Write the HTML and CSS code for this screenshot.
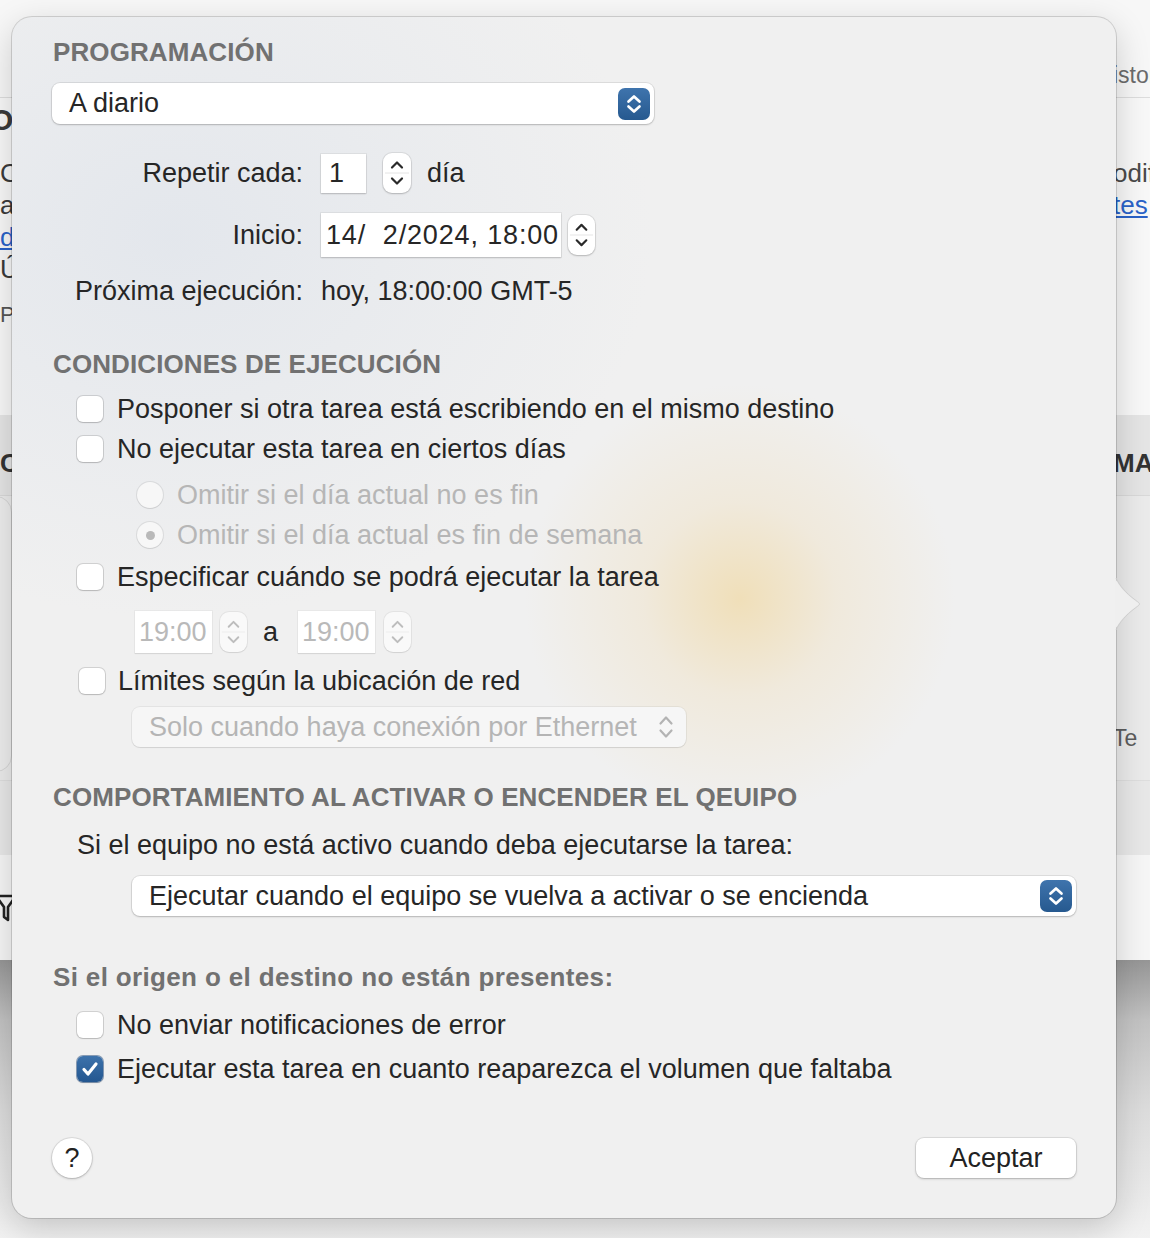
FILE: index.html
```html
<!DOCTYPE html>
<html lang="es">
<head>
<meta charset="utf-8">
<title>Programación</title>
<link rel="stylesheet" href="styles.css">
</head>
<body>
<div class="screen">
  <div class="backdrop" aria-hidden="true">
    <div class="bg-row bg-toolbar">
      <span class="frag-l"></span>
      <span class="frag-r frag-muted">istorial</span>
    </div>
    <div class="bg-content">
      <div class="bg-row bg-line-head"><span class="frag-l frag-head">O</span><span class="frag-r"></span></div>
      <div class="bg-row bg-line bg-line-first"><span class="frag-l">C</span><span class="frag-r frag-dark">odificar</span></div>
      <div class="bg-row bg-line"><span class="frag-l">a</span><span class="frag-r frag-link">tes</span></div>
      <div class="bg-row bg-line"><span class="frag-l frag-link">de</span><span class="frag-r"></span></div>
      <div class="bg-row bg-line"><span class="frag-l">Ú</span><span class="frag-r"></span></div>
      <div class="bg-row bg-line bg-line-last"><span class="frag-l frag-small">P</span><span class="frag-r"></span></div>
    </div>
    <div class="bg-row bg-band"><span class="frag-l frag-bold">C</span><span class="frag-r frag-bold">MAT</span></div>
    <div class="bg-row bg-panel">
      <span class="frag-l"><span class="bg-card"></span></span>
      <span class="frag-r frag-muted frag-te">Te</span>
    </div>
    <div class="bg-strip"></div>
    <div class="bg-row bg-footer">
      <span class="frag-l">
        <svg class="funnel" viewBox="0 0 24 30" width="24" height="30"><path d="M2 3h20l-8 11v13l-4-3V14z" fill="none" stroke="#222" stroke-width="2.6" stroke-linejoin="round"/></svg>
      </span>
      <span class="frag-r"></span>
    </div>
    <div class="bg-shadow"></div>
  </div>

  <div class="popover">
    <svg class="pop-arrow" viewBox="0 0 26 52" width="26" height="52">
      <path d="M0 0 C4 8 10 15 18 21 C22 24 24 25 24 26 C24 27 22 28 18 31 C10 37 4 44 0 52 Z" fill="#efefef"/>
      <path d="M1 0 C5 8 11 15 19 21 C23 24 24.5 25 24.5 26 C24.5 27 23 28 19 31 C11 37 5 44 1 52" fill="none" stroke="#cfcfcf" stroke-width="1"/>
    </svg>

    <h2 class="sec-title">PROGRAMACIÓN</h2>
    <div class="popup popup-freq">
      <span class="popup-label">A diario</span>
      <span class="popup-btn"><svg viewBox="0 0 32 32" width="32" height="32"><path d="M10.5 13.5l5.5-5 5.5 5M10.5 18.5l5.5 5 5.5-5" fill="none" stroke="#fff" stroke-width="2.7" stroke-linecap="round" stroke-linejoin="round"/></svg></span>
    </div>

    <div class="form-row row-repeat">
      <span class="form-label">Repetir cada:</span>
      <span class="field field-num">1</span>
      <span class="stepper stepper-repeat"><svg viewBox="0 0 28 40" width="28" height="40"><line x1="2" y1="20" x2="26" y2="20" stroke="#e4e4e4" stroke-width="1"/><path d="M9 14.5l5-5 5 5M9 25.5l5 5 5-5" fill="none" stroke="#2a2a2a" stroke-width="2.2" stroke-linecap="round" stroke-linejoin="round"/></svg></span>
      <span class="unit">día</span>
    </div>
    <div class="form-row row-start">
      <span class="form-label">Inicio:</span>
      <span class="field field-date">14/  2/2024, 18:00</span>
      <span class="stepper stepper-start"><svg viewBox="0 0 28 40" width="27" height="40"><line x1="2" y1="20" x2="26" y2="20" stroke="#e4e4e4" stroke-width="1"/><path d="M9 14.5l5-5 5 5M9 25.5l5 5 5-5" fill="none" stroke="#2a2a2a" stroke-width="2.2" stroke-linecap="round" stroke-linejoin="round"/></svg></span>
    </div>
    <div class="form-row row-next">
      <span class="form-label">Próxima ejecución:</span>
      <span class="value">hoy, 18:00:00 GMT-5</span>
    </div>

    <h2 class="sec-title title-cond">CONDICIONES DE EJECUCIÓN</h2>
    <label class="check-row cr-1"><span class="cb"></span><span>Posponer si otra tarea está escribiendo en el mismo destino</span></label>
    <label class="check-row cr-2"><span class="cb"></span><span>No ejecutar esta tarea en ciertos días</span></label>
    <div class="radio-row rr-1"><span class="radio"></span><span>Omitir si el día actual no es fin</span></div>
    <div class="radio-row rr-2"><span class="radio radio-on"></span><span>Omitir si el día actual es fin de semana</span></div>
    <label class="check-row cr-3"><span class="cb"></span><span>Especificar cuándo se podrá ejecutar la tarea</span></label>
    <div class="time-row">
      <span class="field field-time">19:00</span>
      <span class="stepper stepper-off"><svg viewBox="0 0 28 40" width="27" height="40"><line x1="2" y1="20" x2="26" y2="20" stroke="#ececec" stroke-width="1"/><path d="M9 14.5l5-5 5 5M9 25.5l5 5 5-5" fill="none" stroke="#bdbdbd" stroke-width="2" stroke-linecap="round" stroke-linejoin="round"/></svg></span>
      <span class="time-sep">a</span>
      <span class="field field-time">19:00</span>
      <span class="stepper stepper-off"><svg viewBox="0 0 28 40" width="27" height="40"><line x1="2" y1="20" x2="26" y2="20" stroke="#ececec" stroke-width="1"/><path d="M9 14.5l5-5 5 5M9 25.5l5 5 5-5" fill="none" stroke="#bdbdbd" stroke-width="2" stroke-linecap="round" stroke-linejoin="round"/></svg></span>
    </div>
    <label class="check-row cr-4"><span class="cb"></span><span>Límites según la ubicación de red</span></label>
    <div class="popup popup-off">
      <span class="popup-label">Solo cuando haya conexión por Ethernet</span>
      <svg class="popup-chev" viewBox="0 0 16 26" width="16" height="26"><path d="M2.5 9.5l5.5-6 5.5 6M2.5 16.5l5.5 6 5.5-6" fill="none" stroke="#b3b3b3" stroke-width="2.2" stroke-linecap="round" stroke-linejoin="round"/></svg>
    </div>

    <h2 class="sec-title title-wake">COMPORTAMIENTO AL ACTIVAR O ENCENDER EL QEUIPO</h2>
    <p class="plain-row">Si el equipo no está activo cuando deba ejecutarse la tarea:</p>
    <div class="popup popup-wake">
      <span class="popup-label">Ejecutar cuando el equipo se vuelva a activar o se encienda</span>
      <span class="popup-btn"><svg viewBox="0 0 32 32" width="32" height="32"><path d="M10.5 13.5l5.5-5 5.5 5M10.5 18.5l5.5 5 5.5-5" fill="none" stroke="#fff" stroke-width="2.7" stroke-linecap="round" stroke-linejoin="round"/></svg></span>
    </div>

    <h2 class="sec-title title-missing">Si el origen o el destino no están presentes:</h2>
    <label class="check-row cr-5"><span class="cb"></span><span>No enviar notificaciones de error</span></label>
    <label class="check-row cr-6"><span class="cb cb-on"><svg viewBox="0 0 26 26" width="26" height="26"><path d="M7 13.5l4 4.5 8-10" fill="none" stroke="#fff" stroke-width="3.2" stroke-linecap="round" stroke-linejoin="round"/></svg></span><span>Ejecutar esta tarea en cuanto reaparezca el volumen que faltaba</span></label>

    <div class="footer">
      <button class="help-btn" type="button">?</button>
      <button class="ok-btn" type="button">Aceptar</button>
    </div>
  </div>
</div>
</body>
</html>
```

FILE: styles.css
```css
* { box-sizing: border-box; }

html, body {
  margin: 0;
  width: 1150px;
  height: 1238px;
  overflow: hidden;
}

body {
  font-family: "Liberation Sans", Arial, sans-serif;
  color: #262626;
  background: #efefef;
}

.screen {
  position: relative;
  width: 1150px;
  height: 1238px;
  overflow: hidden;
}

/* ---------- background window ---------- */
.backdrop {
  display: flex;
  flex-direction: column;
  height: 100%;
}

.bg-row {
  display: flex;
  justify-content: space-between;
}

.frag-l,
.frag-r {
  display: block;
  overflow: hidden;
  white-space: nowrap;
  font-size: 26px;
  line-height: 32px;
  color: #3a3a3a;
}

.frag-l { width: 12px; }
.frag-r { width: 34px; text-indent: -3px; }

.frag-muted { color: #6b6b6b; font-size: 23px; }
.frag-dark { color: #4a4a4a; }
.frag-link { color: #2a62c8; text-decoration: underline; }
.frag-bold { font-weight: bold; color: #333; }
.frag-small { font-size: 22px; color: #555; }
.frag-head { font-weight: bold; font-size: 30px; line-height: 44px; text-indent: -10px; }

.bg-toolbar {
  height: 98px;
  background: #f7f7f7;
  border-bottom: 1px solid #dddddd;
  align-items: flex-end;
  padding-bottom: 6px;
}

.bg-content {
  height: 317px;
  background: #f8f8f8;
  display: flex;
  flex-direction: column;
}

.bg-line-head { height: 44px; }
.bg-line { height: 32px; }
.bg-line-first { margin-top: 15px; }
.bg-line-last { margin-top: 14px; }

.bg-band {
  height: 81px;
  background: #e5e5e5;
  border-bottom: 1px solid #d9d9d9;
  padding-top: 32px;
}

.bg-panel {
  height: 284px;
  background: #ebebeb;
}

.bg-card {
  display: block;
  width: 40px;
  height: 276px;
  margin-left: -28px;
  border: 1px solid #d6d6d6;
  border-radius: 16px;
  background: #ededed;
}

.frag-te {
  align-self: flex-end;
  margin-bottom: 26px;
  color: #5c5c5c;
}

.bg-strip {
  height: 75px;
  background: #e8e8e8;
  border-top: 1px solid #dedede;
}

.bg-footer {
  height: 105px;
  background: #f6f6f6;
  align-items: center;
}

.funnel { display: block; margin-left: -6px; }

.bg-shadow {
  flex: 1;
  background: linear-gradient(#969696 0, #c2c2c2 60px, #dcdcdc 150px, #ebebeb 240px, #f2f2f2 100%);
}

/* ---------- popover ---------- */
.popover {
  position: absolute;
  left: 12px;
  top: 17px;
  width: 1104px;
  height: 1201px;
  padding: 20px 40px 40px;
  display: flex;
  flex-direction: column;
  border-radius: 20px;
  background:
    radial-gradient(circle 215px at 728px 582px, rgba(240, 222, 182, 0.95) 0, rgba(240, 228, 204, 0.55) 45%, rgba(240, 240, 240, 0) 100%),
    radial-gradient(ellipse 480px 380px at 160px 220px, rgba(226, 230, 236, 0.9), rgba(240, 240, 240, 0) 100%),
    #f0f0f0;
  box-shadow: 0 0 0 1px rgba(0, 0, 0, 0.14), 0 10px 34px rgba(0, 0, 0, 0.18);
  font-size: 27px;
}

.pop-arrow {
  position: absolute;
  left: 1103px;
  top: 561px;
}

.sec-title {
  margin: 0;
  padding-left: 1px;
  height: 30px;
  line-height: 30px;
  font-size: 26px;
  font-weight: bold;
  color: #717171;
  white-space: nowrap;
  letter-spacing: 0.1px;
}

.title-cond { margin-top: 40px; }
.title-wake { margin-top: 35px; }
.title-missing { margin-top: 46px; letter-spacing: 0.35px; }

/* popup buttons */
.popup {
  display: flex;
  align-items: center;
  justify-content: space-between;
  height: 40px;
  padding: 0 4px 0 17px;
  background: #ffffff;
  border-radius: 8px;
  box-shadow: 0 0 0 1px rgba(0, 0, 0, 0.08), 0 1px 2px rgba(0, 0, 0, 0.18);
  white-space: nowrap;
}

.popup-freq {
  margin-top: 16px;
  width: 602px;
  height: 41px;
}

.popup-wake {
  margin-top: 13px;
  margin-left: 80px;
  width: 944px;
}

.popup-off {
  margin-top: 8px;
  margin-left: 80px;
  width: 554px;
  padding-right: 12px;
  background: #f6f6f6;
  color: #b5b5b5;
  box-shadow: 0 0 0 1px rgba(0, 0, 0, 0.05), 0 1px 1px rgba(0, 0, 0, 0.08);
}

.popup-btn {
  display: flex;
  width: 32px;
  height: 32px;
  border-radius: 7px;
  background: linear-gradient(#3f74ad, #26598f);
}

.popup-chev { display: block; }

/* form rows */
.form-row {
  display: flex;
  align-items: center;
  white-space: nowrap;
}

.form-label {
  width: 251px;
  margin-right: 18px;
  text-align: right;
}

.row-repeat { margin-top: 29px; height: 40px; }
.row-start { margin-top: 20px; height: 44px; }
.row-next { margin-top: 16px; height: 36px; }

.field {
  display: flex;
  align-items: center;
  background: #ffffff;
  box-shadow: 0 0 0 1px rgba(0, 0, 0, 0.05), 0 1px 1.5px rgba(0, 0, 0, 0.18);
  white-space: pre;
}

.field-num { width: 45px; height: 39px; padding-left: 8px; }
.field-date { width: 240px; height: 44px; padding-left: 5px; letter-spacing: 0.85px; }

.stepper {
  display: flex;
  width: 28px;
  height: 40px;
  border-radius: 9px;
  background: #ffffff;
  box-shadow: 0 0 0 1px rgba(0, 0, 0, 0.07), 0 1px 2px rgba(0, 0, 0, 0.18);
  overflow: hidden;
}

.stepper-repeat { margin-left: 17px; }
.stepper-start { margin-left: 7px; width: 27px; }
.unit { margin-left: 16px; }

/* checkboxes */
.check-row,
.radio-row,
.plain-row {
  display: flex;
  align-items: center;
  gap: 14px;
  height: 36px;
  margin: 0;
  padding-left: 25px;
  white-space: nowrap;
}

.cr-1 { margin-top: 12px; }
.cr-2 { margin-top: 4px; }
.cr-3 { margin-top: 6px; }
.cr-4 { margin-top: 9px; padding-left: 27px; gap: 13px; }
.cr-5 { margin-top: 15px; }
.cr-6 { margin-top: 8px; }

.cb {
  flex: none;
  width: 26px;
  height: 26px;
  border-radius: 6px;
  background: #ffffff;
  box-shadow: 0 0 0 1px rgba(0, 0, 0, 0.13), 0 1px 1.5px rgba(0, 0, 0, 0.12);
}

.cb-on {
  display: flex;
  background: linear-gradient(#3d72ab, #245790);
  box-shadow: 0 0 0 1px rgba(30, 70, 120, 0.5), 0 1px 1.5px rgba(0, 0, 0, 0.15);
}

.radio-row {
  padding-left: 85px;
  color: #b6b6b6;
}

.rr-1 { margin-top: 10px; }
.rr-2 { margin-top: 4px; }

.radio {
  flex: none;
  display: flex;
  align-items: center;
  justify-content: center;
  width: 26px;
  height: 26px;
  border-radius: 50%;
  background: #f7f7f7;
  box-shadow: 0 0 0 1px rgba(0, 0, 0, 0.08), 0 1px 1px rgba(0, 0, 0, 0.06);
}

.radio-on::after {
  content: "";
  width: 9px;
  height: 9px;
  border-radius: 50%;
  background: #b9b9b9;
}

/* time range */
.time-row {
  display: flex;
  align-items: center;
  height: 44px;
  margin-top: 15px;
  padding-left: 83px;
}

.field-time {
  width: 77px;
  height: 42px;
  padding-left: 4px;
  color: #b9b9b9;
  box-shadow: 0 0 0 1px rgba(0, 0, 0, 0.03), 0 1px 1px rgba(0, 0, 0, 0.08);
}

.stepper-off {
  width: 27px;
  margin-left: 8px;
  background: #f9f9f9;
  box-shadow: 0 0 0 1px rgba(0, 0, 0, 0.05), 0 1px 1px rgba(0, 0, 0, 0.08);
}

.stepper-off:last-child { margin-left: 9px; }

.time-sep {
  margin: 0 20px 0 16px;
}

/* text row */
.plain-row { margin-top: 15px; }

/* footer */
.footer {
  display: flex;
  justify-content: space-between;
  align-items: center;
  height: 40px;
  margin-top: 51px;
}

.help-btn,
.ok-btn {
  font-family: inherit;
  font-size: 27px;
  color: #222;
  background: #ffffff;
  border: 0;
  padding: 0;
  box-shadow: 0 0 0 1px rgba(0, 0, 0, 0.08), 0 1px 2.5px rgba(0, 0, 0, 0.22);
}

.help-btn {
  width: 40px;
  height: 40px;
  border-radius: 50%;
}

.ok-btn {
  width: 160px;
  height: 40px;
  border-radius: 8px;
}
```
